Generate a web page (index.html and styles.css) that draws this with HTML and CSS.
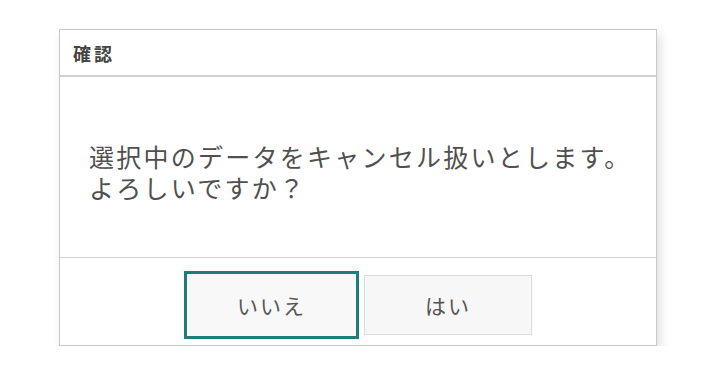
FILE: index.html
```html
<!DOCTYPE html>
<html lang="ja">
<head>
<meta charset="utf-8">
<link rel="stylesheet" href="styles.css">
</head>
<body>
<div class="page">
  <div class="dialog">
    <div class="dialog-header">確認</div>
    <div class="dialog-body">
      <p class="message">選択中のデータをキャンセル扱いとします。<br>よろしいですか？</p>
    </div>
    <div class="dialog-footer">
      <button class="btn btn-focused">いいえ</button>
      <button class="btn">はい</button>
    </div>
  </div>
</div>
</body>
</html>
```
FILE: styles.css
```css
html, body {
  margin: 0;
  padding: 0;
  background: #ffffff;
}
body {
  font-family: "Noto Sans CJK JP", "Noto Sans", sans-serif;
  color: #4a4a4a;
}
.page {
  padding: 29px 0 0 59px;
}
.dialog {
  width: 596px;
  border: 1px solid #c9c9c9;
  background: #ffffff;
  box-shadow: 3px 5px 10px rgba(0, 0, 0, 0.13);
}
.dialog-header {
  height: 45px;
  display: flex;
  align-items: center;
  padding-left: 13px;
  font-size: 18px;
  font-weight: 700;
  color: #444444;
  border-bottom: 2px solid #d2d2d2;
  letter-spacing: 3px;
}
.dialog-body {
  height: 181px;
  box-sizing: border-box;
  padding: 64px 0 0 29px;
  border-bottom: 1px solid #cfcfcf;
}
.message {
  margin: 0;
  font-size: 25px;
  line-height: 31px;
  letter-spacing: 2.25px;
  color: #505050;
  font-weight: 400;
}
.dialog-footer {
  height: 87px;
  box-sizing: border-box;
  padding-top: 6px;
  display: flex;
  justify-content: center;
  align-items: center;
  gap: 5px;
}
.btn {
  width: 168px;
  height: 60px;
  border: 1px solid #dcdcdc;
  background: #f7f7f7;
  font-family: "Noto Sans CJK JP", "Noto Sans", sans-serif;
  font-size: 21px;
  letter-spacing: 2px;
  color: #555555;
  padding: 0;
  margin: 0;
}
.btn-focused {
  width: 175px;
  height: 68px;
  border: 3px solid #1f7c77;
  background: #f8f8f8;
}
```
